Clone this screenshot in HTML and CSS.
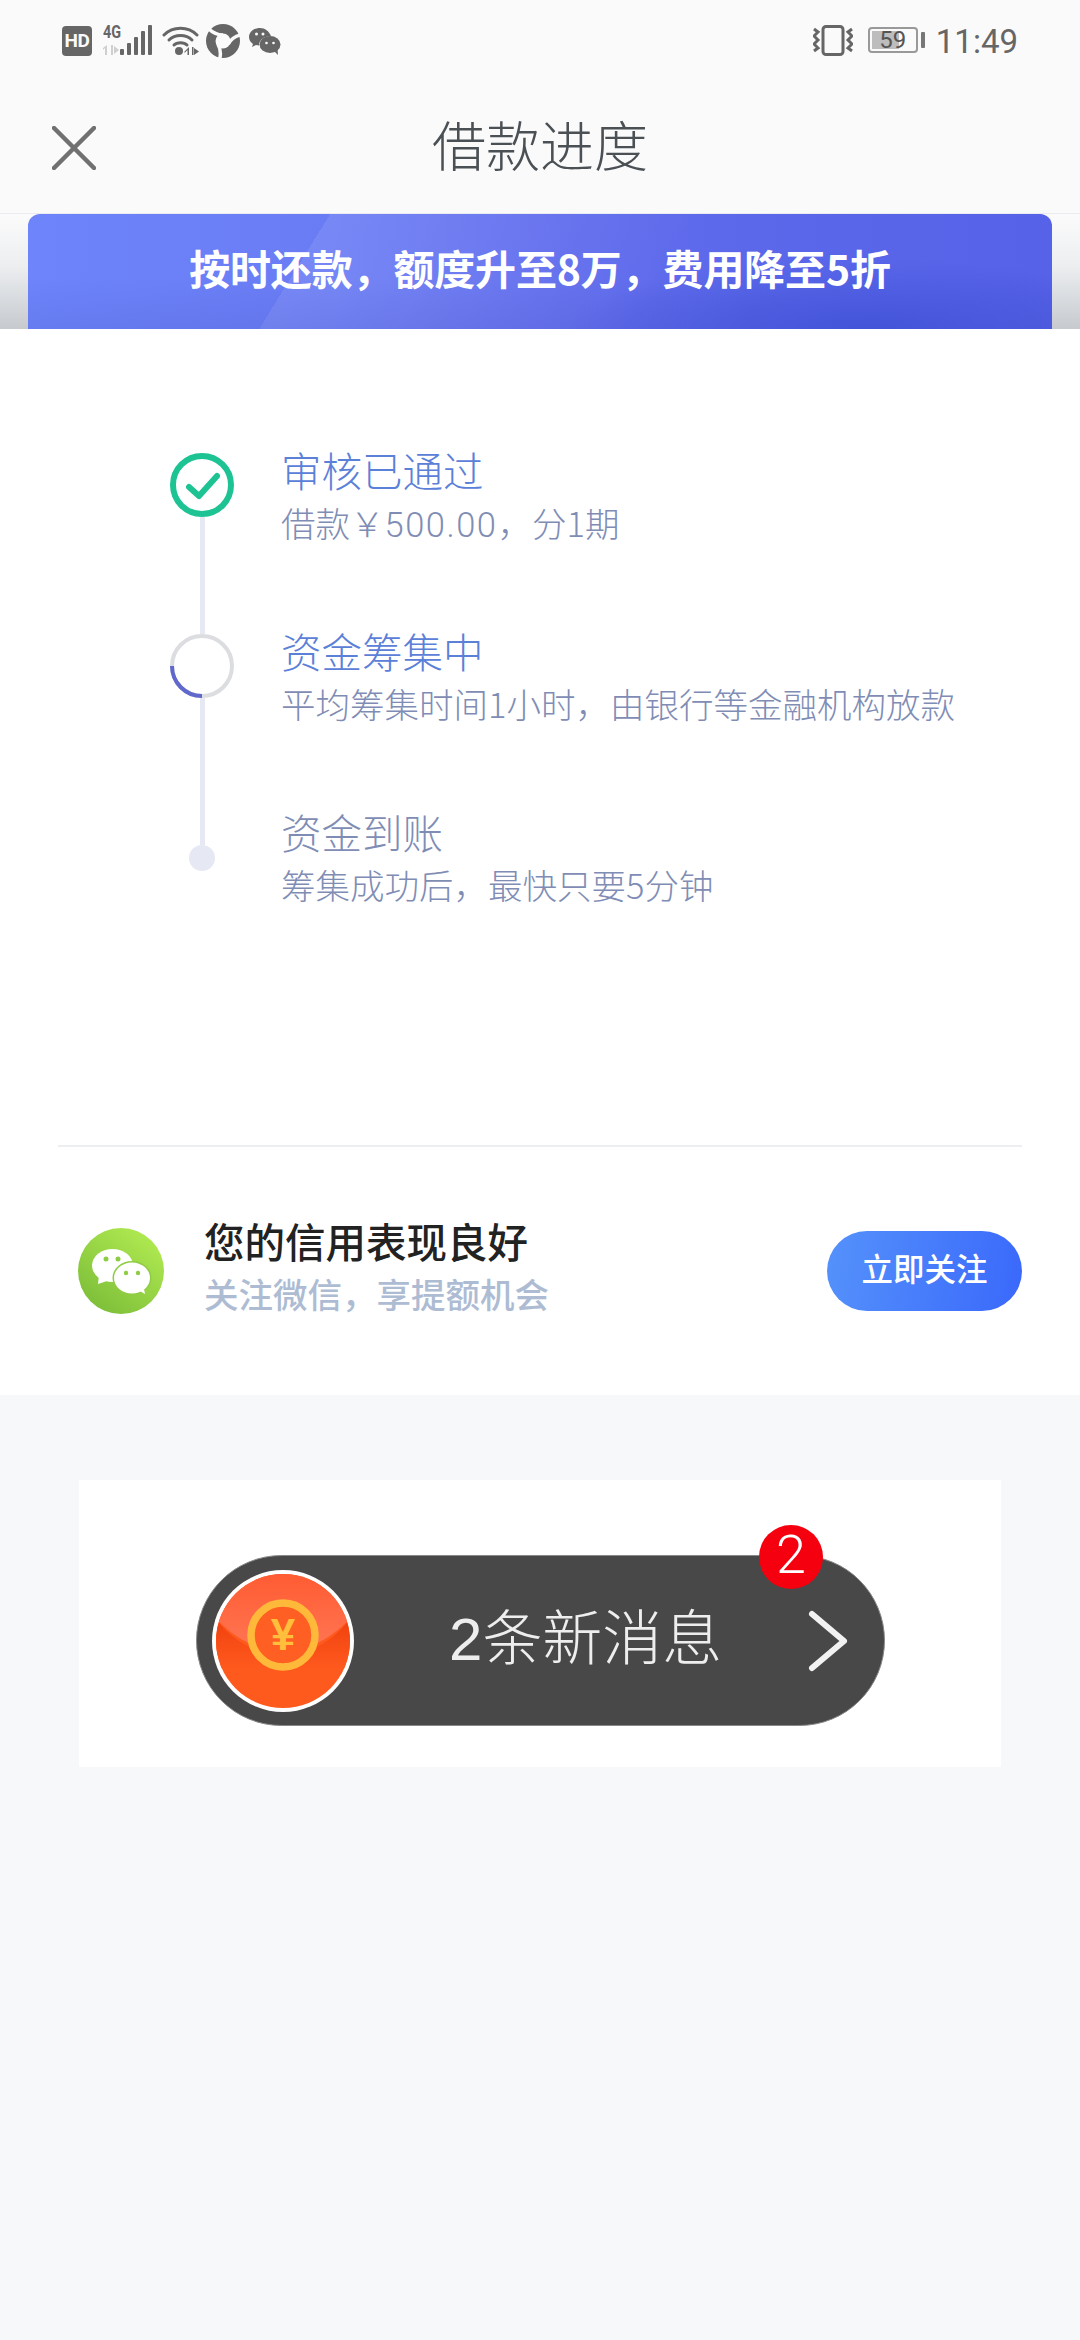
FILE: index.html
```html
<!DOCTYPE html>
<html lang="zh-CN">
<head>
<meta charset="utf-8">
<title>借款进度</title>
<link rel="stylesheet" href="styles.css">
</head>
<body>
<header class="top">
  <div class="status">
    <div class="status-left">
      <span class="hd">HD</span>
      <div class="net">
        <span class="net-text">4G</span>
        <svg class="net-arrows" width="17" height="10" viewBox="0 0 17 10"><path d="M4 0v10H2V3L0 5V3zM10 0v10H8V0zM11 1l5 4-5 4z" fill="#cfcfcf"/></svg>
      </div>
      <svg class="signal" width="33" height="30" viewBox="0 0 33 30"><g fill="#666"><rect x="0" y="24" width="4" height="6" rx="1"/><rect x="7" y="18" width="4" height="12" rx="1"/><rect x="14" y="12" width="4" height="18" rx="1"/><rect x="21" y="6" width="4" height="24" rx="1"/><rect x="28" y="0" width="4" height="30" rx="1"/></g></svg>
      <svg class="wifi" width="37" height="31" viewBox="0 0 37 31"><g fill="none" stroke="#666" stroke-width="3" stroke-linecap="round"><path d="M2 10C11 1 26 1 35 10"/><path d="M7 15C13 9 24 9 30 15"/><path d="M12 20C15 17 22 17 25 20"/></g><circle cx="17" cy="26" r="4" fill="#666"/><path d="M27 22v8h-1.500v-5l-3 3v-1.500zM30 22v8h1.500v-8zM32 23l5 3.500-5 3.500z" fill="#666"/></svg>
      <svg class="orbit" width="34" height="34" viewBox="0 0 34 34"><circle cx="17" cy="17" r="17" fill="#666"/><circle cx="17" cy="17" r="7.500" fill="#fafafa"/><g fill="none" stroke="#fafafa" stroke-width="3.500"><path id="blade" d="M17 11C12 11 7 9 3 5"/><path d="M17 11C12 11 7 9 3 5" transform="rotate(120 17 17)"/><path d="M17 11C12 11 7 9 3 5" transform="rotate(240 17 17)"/></g></svg>
      <svg class="chat" width="32" height="27" viewBox="0 0 32 27"><path d="M11 0C5 0 0 4 0 9c0 3 1.500 5 4 7l-1 3 4-2c1 .300 2 .500 3 .500C10 12 15 8 22 8 20 3 16 0 11 0z" fill="#666"/><ellipse cx="21" cy="16.500" rx="10.500" ry="8.500" fill="#666"/><path d="M25 23l4 4-.5-6z" fill="#666"/><g fill="#fafafa"><circle cx="7.500" cy="6" r="1.500"/><circle cx="14" cy="6" r="1.500"/><circle cx="17.500" cy="15" r="1.300"/><circle cx="24.500" cy="15" r="1.300"/></g></svg>
    </div>
    <div class="status-right">
      <svg class="vibrate" width="40" height="31" viewBox="0 0 40 31"><rect x="10" y="1.500" width="20" height="28" rx="3" fill="none" stroke="#666" stroke-width="3"/><g fill="none" stroke="#666" stroke-width="3"><path d="M1 4l4 3-4 4 4 4-4 4 4 4-4 3"/><path d="M39 4l-4 3 4 4-4 4 4 4-4 4 4 3"/></g></svg>
      <div class="battery">
        <div class="battery-body"><span class="battery-fill"></span><span class="battery-num">59</span></div>
        <span class="battery-nub"></span>
      </div>
      <span class="time">11:49</span>
    </div>
  </div>
  <nav class="nav">
    <svg class="close" width="44" height="44" viewBox="0 0 44 44"><path d="M2 2L42 42M42 2L2 42" stroke="#707070" stroke-width="4.500" stroke-linecap="round"/></svg>
    <h1 class="nav-title">借款进度</h1>
    <span></span>
  </nav>
</header>

<div class="strip">
  <div class="banner">按时还款，额度升至8万，费用降至5折</div>
</div>

<main class="panel">
  <section class="timeline">
    <div class="step">
      <div class="rail">
        <svg class="node" width="64" height="64" viewBox="0 0 64 64"><circle cx="32" cy="32" r="29" fill="#fff" stroke="#1dc393" stroke-width="6"/><path d="M19 34l10 9 18-20" fill="none" stroke="#1dc393" stroke-width="6" stroke-linecap="round" stroke-linejoin="round"/></svg>
        <span class="line"></span>
      </div>
      <div class="step-text">
        <div class="step-title">审核已通过</div>
        <div class="step-sub">借款￥<span class="amount">500.00</span>，分1期</div>
      </div>
    </div>
    <div class="step">
      <div class="rail">
        <svg class="node" width="64" height="64" viewBox="0 0 64 64"><circle cx="32" cy="32" r="30" fill="#fff" stroke="#dcdde1" stroke-width="4"/><path d="M2 32A30 30 0 0 0 32 62" fill="none" stroke="#6068cc" stroke-width="4"/></svg>
        <span class="line"></span>
      </div>
      <div class="step-text">
        <div class="step-title">资金筹集中</div>
        <div class="step-sub">平均筹集时间1小时，由银行等金融机构放款</div>
      </div>
    </div>
    <div class="step">
      <div class="rail">
        <span class="line line-end"></span>
        <span class="dot"></span>
      </div>
      <div class="step-text">
        <div class="step-title step-title-todo">资金到账</div>
        <div class="step-sub">筹集成功后，最快只要5分钟</div>
      </div>
    </div>
  </section>
  <div class="follow">
    <svg class="follow-logo" width="86" height="86" viewBox="0 0 86 86">
      <defs>
        <linearGradient id="wx" x1="0.800" y1="0.100" x2="0.200" y2="0.900"><stop offset="0" stop-color="#aee850"/><stop offset="1" stop-color="#7fc03a"/></linearGradient>
      </defs>
      <circle cx="43" cy="43" r="43" fill="url(#wx)"/>
      <ellipse cx="34.500" cy="37.500" rx="20.500" ry="16.500" fill="#fff"/>
      <path d="M21 47L20 56L32 52z" fill="#fff"/>
      <ellipse cx="54" cy="50" rx="19.500" ry="17" fill="#8fcc45"/>
      <ellipse cx="54" cy="50" rx="18" ry="15.500" fill="#fff"/>
      <path d="M60 62L67 66L65 56z" fill="#fff"/>
      <g fill="#8fcc45"><circle cx="28" cy="31" r="2.500"/><circle cx="40" cy="31" r="2.500"/><circle cx="48" cy="45" r="2.200"/><circle cx="60" cy="45" r="2.200"/></g>
    </svg>
    <div class="follow-text">
      <div class="follow-title">您的信用表现良好</div>
      <div class="follow-sub">关注微信，享提额机会</div>
    </div>
    <button class="follow-btn">立即关注</button>
  </div>
</main>

<aside class="ad">
  <div class="pill">
    <svg class="packet" width="144" height="144" viewBox="0 0 144 144">
      <defs>
        <clipPath id="pc"><circle cx="72" cy="72" r="67"/></clipPath>
        <linearGradient id="flap" x1="0" y1="0" x2="0" y2="1"><stop offset="0" stop-color="#ff5a30"/><stop offset="1" stop-color="#ff7654"/></linearGradient>
        <linearGradient id="fold" x1="0" y1="0" x2="0" y2="1"><stop offset="0" stop-color="#ee3d0c"/><stop offset="1" stop-color="#ff5a1e"/></linearGradient>
      </defs>
      <circle cx="72" cy="72" r="71" fill="#fff"/>
      <g clip-path="url(#pc)">
        <rect width="144" height="144" fill="#ff5a1e"/>
        <path d="M0 44C24 76 48 86 72 86S120 76 144 44V100H0z" fill="url(#fold)"/>
        <path d="M0 0H144V44C120 72 95 82 72 82S24 72 0 44z" fill="url(#flap)"/>
      </g>
      <circle cx="72" cy="66" r="32" fill="#ff5f22" stroke="#ffb93a" stroke-width="7.500"/>
      <text class="packet-yen" x="72" y="81" text-anchor="middle">¥</text>
    </svg>
    <span class="pill-text"><span class="pill-digit">2</span>条新消息</span>
    <svg class="pill-arrow" width="40" height="62" viewBox="0 0 40 62"><path d="M4 4L36 31L4 58" fill="none" stroke="#f2f2f2" stroke-width="6" stroke-linecap="round" stroke-linejoin="round"/></svg>
    <span class="badge">2</span>
  </div>
</aside>
</body>
</html>
```
FILE: styles.css
```css
* { box-sizing: border-box; }
html, body { margin: 0; padding: 0; }
body {
  width: 1080px;
  height: 2340px;
  overflow: hidden;
  background: #f7f8fa;
  font-family: "Noto Sans CJK SC", "Noto Sans", sans-serif;
}

.top { background: #fafafa; height: 214px; border-bottom: 1px solid #e9ebf0; }

.status {
  height: 80px;
  display: flex;
  justify-content: space-between;
  padding: 24px 62px 0 62px;
}
.status-left { display: flex; align-items: flex-start; }
.status-right { display: flex; align-items: flex-start; }

.hd {
  width: 30px;
  height: 30px;
  margin-top: 2px;
  border-radius: 4px;
  background: #666;
  color: #fafafa;
  font: 700 19px/30px "Roboto", sans-serif;
  text-align: center;
  letter-spacing: -0.5px;
}
.net { width: 17px; margin-left: 11px; display: flex; flex-direction: column; gap: 6px; }
.net-text { font: 700 18px/15px "Roboto", sans-serif; color: #666; transform: scaleX(.8); transform-origin: left; }
.signal { margin: 1px 0 0 0; }
.wifi { margin: 1px 0 0 9px; }
.orbit { margin: 0 0 0 7px; }
.chat { margin: 4px 0 0 9px; }

.vibrate { margin-top: 1px; }
.battery { display: flex; align-items: center; margin: 3px 0 0 15px; height: 26px; }
.battery-body {
  position: relative;
  width: 50px;
  height: 26px;
  border: 2px solid #999;
  border-radius: 4px;
  overflow: hidden;
}
.battery-fill { position: absolute; left: 2px; top: 2px; bottom: 2px; width: 27px; background: #bdbdbd; }
.battery-num {
  position: relative;
  display: block;
  text-align: center;
  font: 400 24px/22px "Roboto", sans-serif;
  color: #555;
}
.battery-nub { width: 4px; height: 16px; margin-left: 3px; border-radius: 1px; background: #777; }
.time { margin: -2px 0 0 11px; font: 400 33px/40px "Roboto", sans-serif; color: #666; }

.nav {
  height: 133px;
  display: grid;
  grid-template-columns: 1fr auto 1fr;
  align-items: center;
  padding: 0 52px;
}
.close { margin-top: 2px; }
.nav-title {
  margin: -6px 0 0;
  font-size: 54px;
  line-height: 76px;
  font-weight: 300;
  color: #4b5055;
}

.strip {
  height: 115px;
  padding: 0 28px;
  background: linear-gradient(180deg, #fbfbfb 0%, #eceef0 45%, #c6cacf 100%);
}
.banner {
  height: 115px;
  border-radius: 12px 12px 0 0;
  background:
    radial-gradient(ellipse 300px 70px at 82% 100%, rgba(62, 80, 215, .75), transparent),
    linear-gradient(180deg, transparent 55%, rgba(60, 70, 180, .14) 100%),
    linear-gradient(121.700deg, transparent 0 27.600%, rgba(255, 255, 255, .09) 27.600%, transparent 62%),
    linear-gradient(90deg, #6d84fa 0%, #6a7cf4 30%, #6470ee 50%, #5b68ea 70%, #5662e8 100%);
  color: #fff;
  text-align: center;
  font-size: 41px;
  font-weight: 700;
  letter-spacing: -0.15px;
  line-height: 106px;
}

.panel { background: #fff; height: 1066px; }

.timeline { height: 816px; padding: 124px 0 0 170px; }
.step { display: flex; height: 181px; gap: 47px; }
.rail { width: 64px; display: flex; flex-direction: column; align-items: center; }
.node { flex: none; display: block; }
.line { flex: 1; width: 5px; background: #e6e8f4; }
.line-end { flex: none; height: 30px; }
.dot { width: 26px; height: 26px; border-radius: 50%; background: #e6e8f4; }
.step-text { margin-top: -10px; }
.step-title { font-size: 40.500px; line-height: 54px; font-weight: 300; color: #5b80d8; }
.step-title-todo { color: #7f8db5; }
.step-sub { font-size: 34.500px; line-height: 50px; font-weight: 300; color: #7f8db5; }
.amount { font-family: "Roboto", sans-serif; letter-spacing: 1.500px; }

.follow {
  height: 250px;
  margin: 0 58px;
  border-top: 2px solid #eceef2;
  display: flex;
  align-items: center;
  padding: 0 0 0 20px;
}
.follow-logo { flex: none; }
.follow-text { flex: 1; margin: 0 0 10px 40px; }
.follow-title { font-size: 40.500px; line-height: 54px; font-weight: 500; color: #222; }
.follow-sub { font-size: 34.500px; line-height: 50px; font-weight: 500; color: #aebcd3; }
.follow-btn {
  width: 195px;
  height: 80px;
  border: 0;
  border-radius: 40px;
  background: linear-gradient(100deg, #5592fb, #3a68fb);
  color: #fff;
  font: 500 31.500px/72px "Noto Sans CJK SC", sans-serif;
  padding: 0 0 8px;
}

.ad {
  margin: 85px 0 0 79px;
  width: 922px;
  height: 287px;
  background: #fff;
  padding: 75px 0 0 117px;
}
.pill {
  position: relative;
  width: 689px;
  height: 171px;
  border-radius: 86px;
  background: #484848;
  border: 1px solid #888;
  display: flex;
  align-items: center;
  padding-left: 14px;
}
.packet { flex: none; }
.packet-yen { font: 700 44px "Liberation Sans", sans-serif; fill: #ffbf3c; }
.pill-text { margin: -8px 0 0 94px; font-size: 60px; font-weight: 300; color: #eee; line-height: 1; }
.pill-digit { font-family: "Liberation Sans", sans-serif; }
.pill-arrow { margin-left: 86px; }
.badge {
  position: absolute;
  top: -31px;
  left: 562px;
  width: 64px;
  height: 64px;
  border-radius: 50%;
  background: #f5000f;
  color: #fff;
  font: 300 54px/60px "Roboto", sans-serif;
  text-align: center;
}
```
